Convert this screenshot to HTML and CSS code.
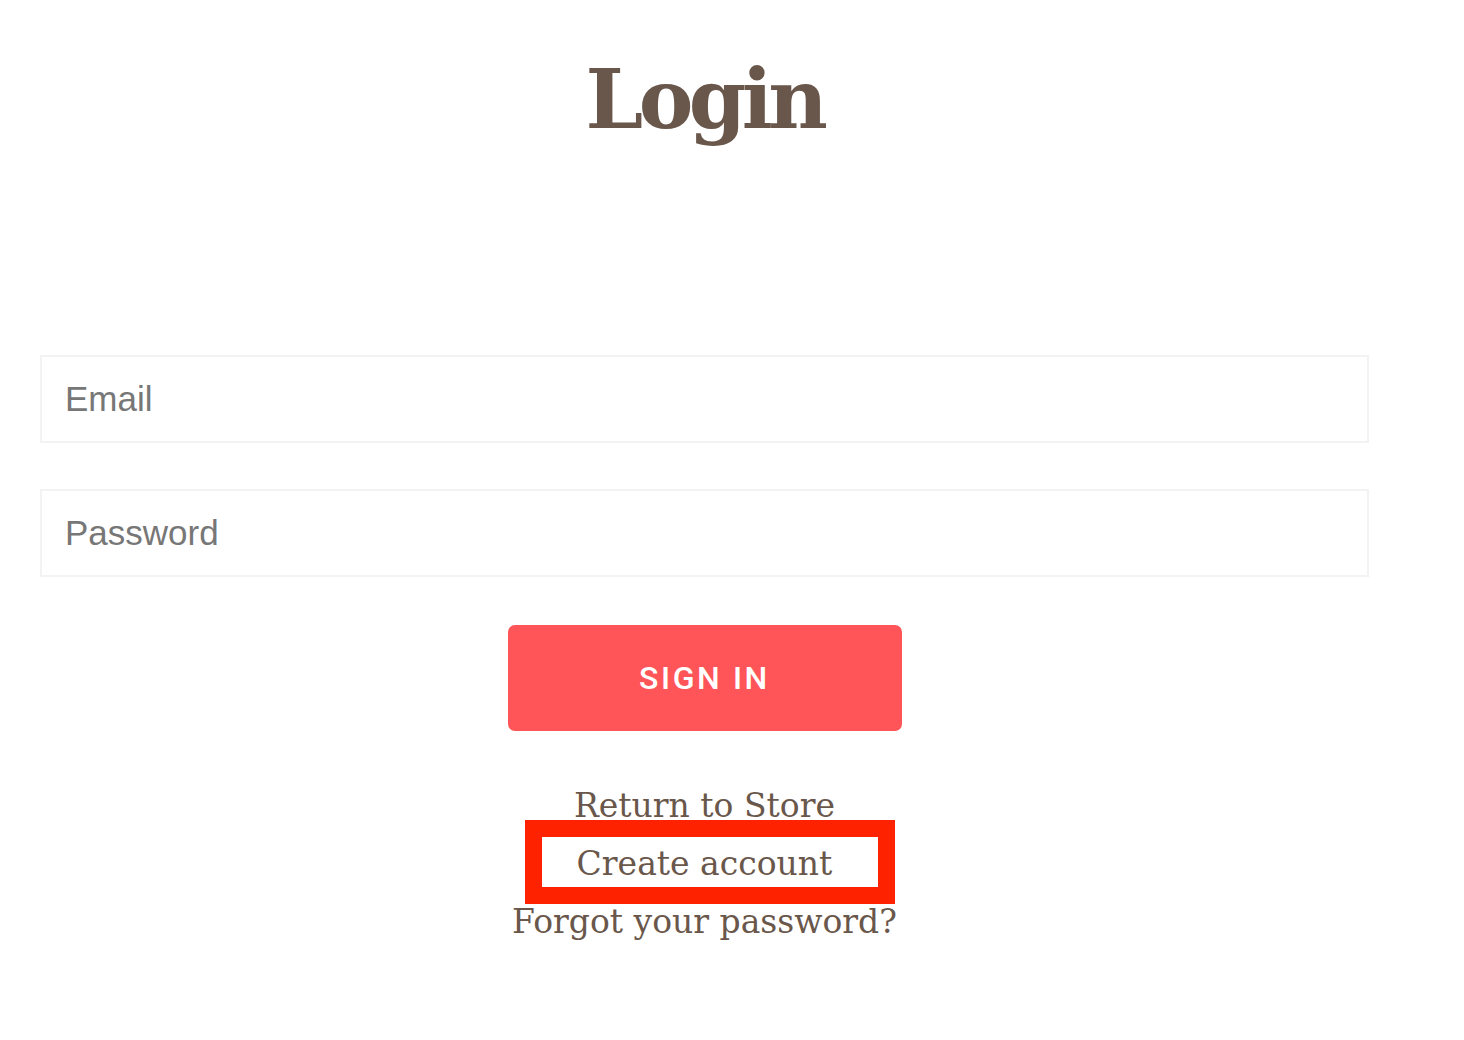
FILE: index.html
```html
<!DOCTYPE html>
<html lang="en">
<head>
<meta charset="utf-8">
<title>Login</title>
<link rel="stylesheet" href="styles.css">
</head>
<body>
<main class="page">
  <h1 class="title">Login</h1>
  <form class="form">
    <input class="field" type="email" placeholder="Email">
    <input class="field" type="password" placeholder="Password">
    <button class="btn" type="button">Sign In</button>
  </form>
  <nav class="links">
    <a class="link" href="#">Return to Store</a>
    <span class="highlight-wrap">
      <a class="link" href="#">Create account</a>
      <span class="highlight"></span>
    </span>
    <a class="link" href="#">Forgot your password?</a>
  </nav>
</main>
</body>
</html>
```
FILE: styles.css
```css
html, body {
  margin: 0;
  padding: 0;
  background: #ffffff;
}
.page {
  width: 1329px;
  margin-left: 40px;
  display: flex;
  flex-direction: column;
  align-items: center;
}
.title {
  margin: 44px 0 0;
  font-family: "DejaVu Serif", serif;
  font-weight: bold;
  font-size: 82px;
  line-height: 110px;
  color: #6a574b;
  letter-spacing: -4.5px;
}
.form {
  width: 100%;
  margin-top: 201px;
  display: flex;
  flex-direction: column;
  align-items: center;
  gap: 46px;
}
.field {
  box-sizing: border-box;
  width: 100%;
  height: 88px;
  border: 2px solid #f3f3f3;
  padding: 0 23px;
  font-family: "Liberation Sans", Arial, sans-serif;
  font-size: 35px;
  color: #333;
  background: #fff;
  outline: none;
}
.field::placeholder {
  color: #777777;
}
.btn {
  width: 394px;
  height: 106px;
  border: none;
  border-radius: 7px;
  background: #ff5558;
  color: #ffffff;
  font-family: Roboto, sans-serif;
  font-weight: 500;
  font-size: 32px;
  letter-spacing: 2.6px;
  text-transform: uppercase;
  margin-top: 2px;
}
.links {
  margin-top: 46px;
  display: flex;
  flex-direction: column;
  align-items: center;
}
.link {
  font-family: "DejaVu Serif", serif;
  font-size: 33px;
  line-height: 58px;
  color: #6a574b;
  text-decoration: none;
}
.highlight-wrap {
  position: relative;
  display: block;
}
.highlight {
  position: absolute;
  left: -52px;
  right: -63px;
  top: -15px;
  bottom: -11px;
  border: 17px solid #ff2200;
  pointer-events: none;
}
```
